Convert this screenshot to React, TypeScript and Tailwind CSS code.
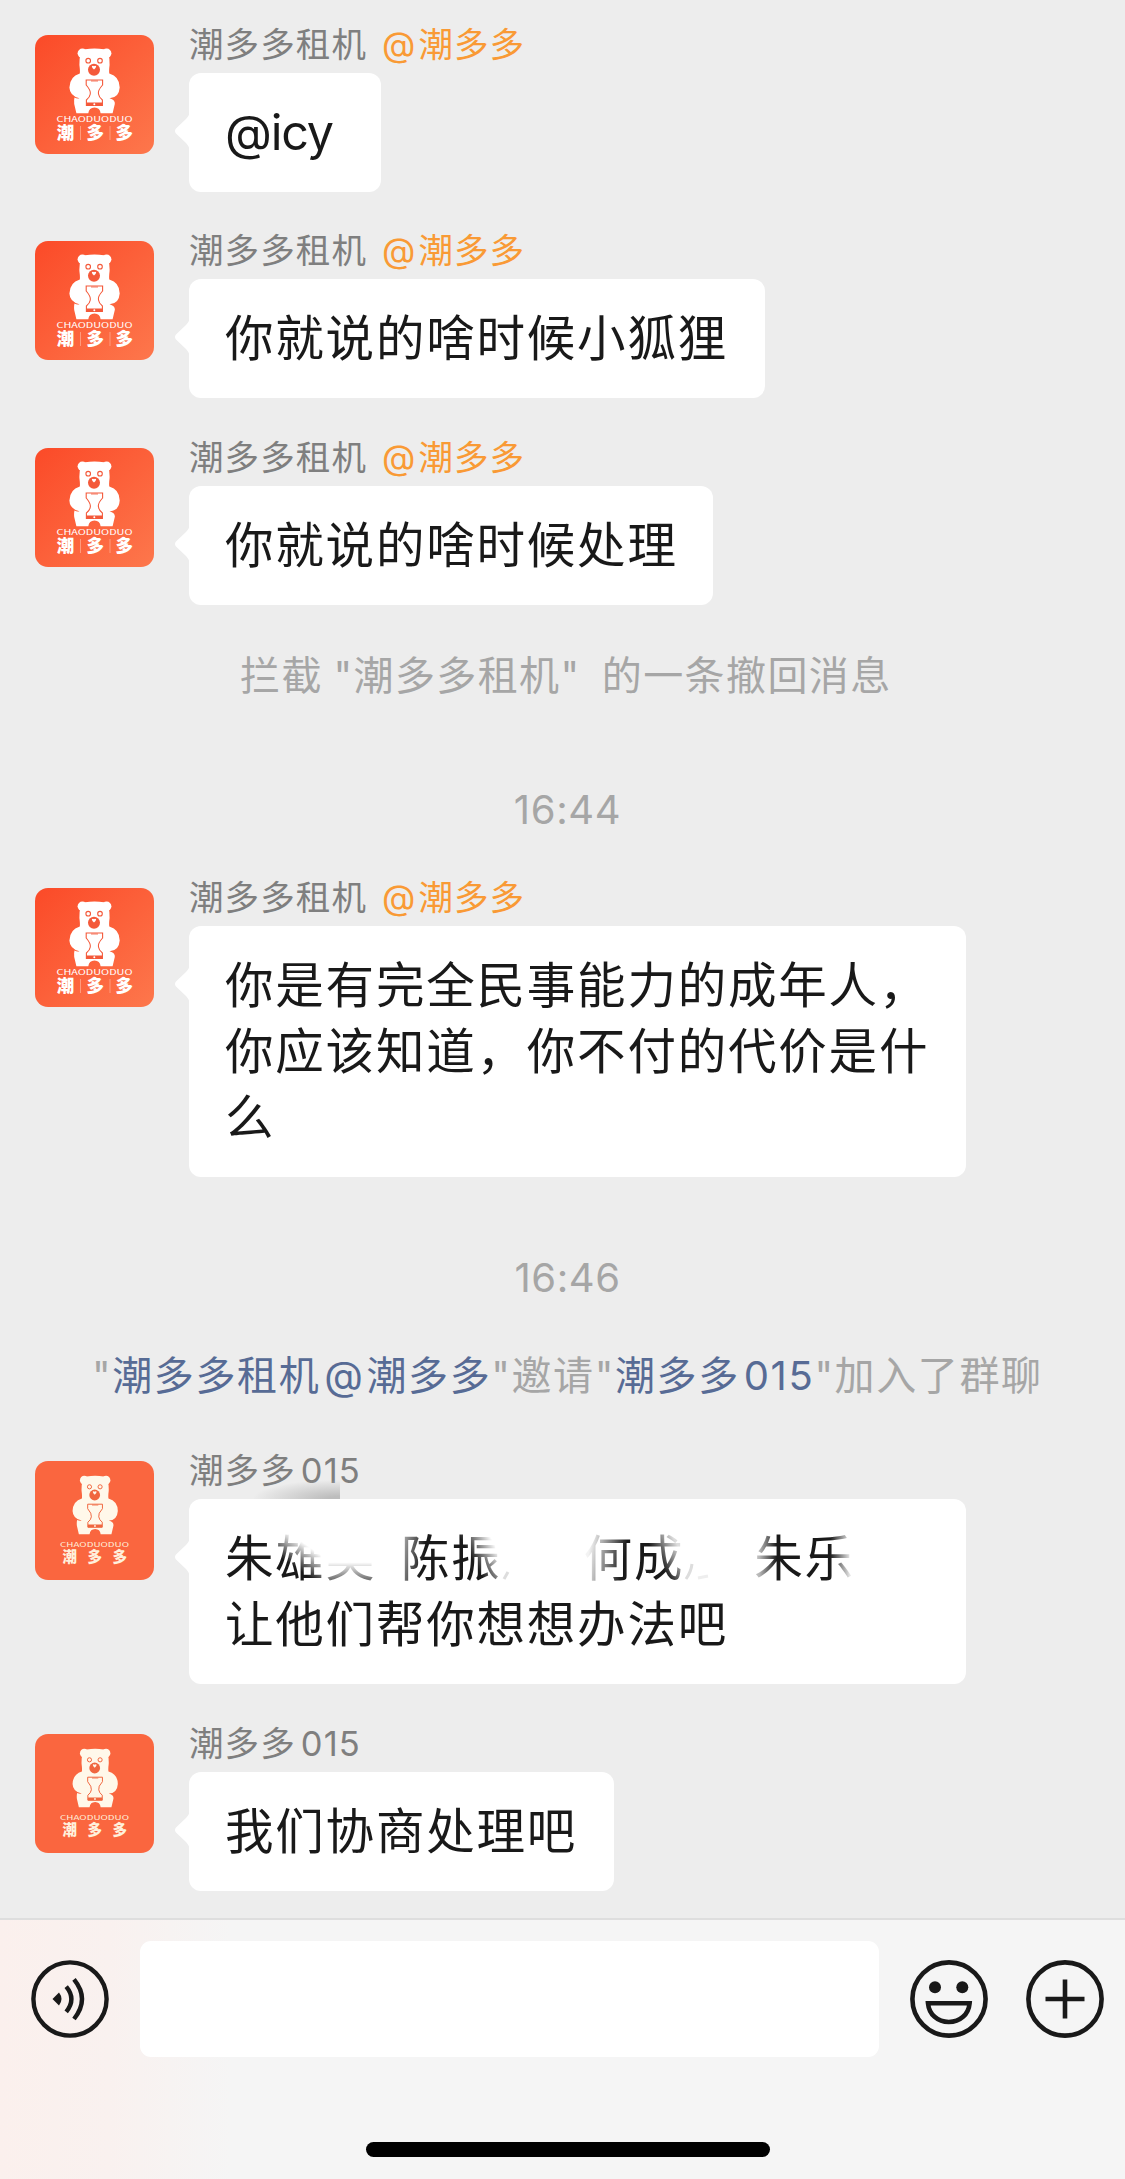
import React from 'react';
import clsx from 'clsx';

const cjk = "font-['Inter','Noto_Sans_CJK_SC',sans-serif]";

const Bear = ({ fill, ground }: { fill: string; ground: string }) => (
  <g>
    <g fill={fill}>
      <circle cx="47.4" cy="18.3" r="4.8" />
      <circle cx="71.6" cy="18.3" r="4.8" />
      <path d="M50 14.3 Q59.5 12.6 69 14.3 Q75 17 74.6 30 Q73.8 36 74.3 38.6 Q84.6 41.5 84.7 52.5 Q84 63 74.5 63.2 Q80.5 65 79.8 69 L77.6 78.3 H65.6 Q65 72.8 59.5 72.6 Q54 72.8 53.3 78.3 H41.4 L39.2 69 Q38.8 65 39.5 62.6 Q42 64 44.5 63.2 Q34.7 61 34.4 52.5 Q34.8 41.5 44.8 38.6 Q45.2 36 44.4 30 Q44 17 50 14.3 Z" />
    </g>
    <g fill="none" stroke={ground}>
      <circle cx="53.2" cy="25.7" r="2.3" strokeWidth="1.1" />
      <circle cx="65" cy="25.7" r="2.3" strokeWidth="1.1" />
      <path
        d="M51.2 45 H67.6 V50 Q62.5 55.5 63.5 59 Q64 62.5 67.4 65 V70.5 H51.4 V65 Q54.8 62.5 55.3 59 Q56 55.5 51.2 50 Z"
        strokeWidth="1.1"
      />
      <path d="M56 46 H63" strokeWidth=".8" />
    </g>
    <path d="M51.4 67.6 H67.4 V70.8 H51.4 Z" fill={ground} />
    <circle cx="59.3" cy="69.2" r="1" fill={fill} />
    <circle cx="59" cy="34.8" r="6" fill={ground} />
    <path d="M56.8 31.2 Q58 30.2 59 31.2 Q60 30.2 61.2 31.2 Q61 33 59 34.5 Q57 33 56.8 31.2 Z" fill={fill} />
  </g>
);

const Avatar = ({ flat }: { flat?: boolean }) => (
  <svg
    viewBox="0 0 119 119"
    className="w-[119px] h-[119px] shrink-0 rounded-[13px] font-['Noto_Sans_CJK_SC',sans-serif]"
  >
    <defs>
      <linearGradient id="brand" x1="0" y1="0" x2="1" y2="1">
        <stop offset="0" stopColor="#fb4a28" />
        <stop offset="1" stopColor="#fd774c" />
      </linearGradient>
    </defs>
    {flat ? (
      <>
        <rect width="119" height="119" fill="#fa663f" />
        <g transform="translate(6.6 2.7) scale(.9)">
          <Bear fill="#fff8ea" ground="#f0663f" />
        </g>
        <g fill="#fff0dc">
          <text x="25" y="86" fontSize="6.6" textLength="69" lengthAdjust="spacingAndGlyphs">
            CHAODUODUO
          </text>
          <g fontSize="14.5" fontWeight="900">
            <text x="27.5" y="101">潮</text>
            <text x="52.5" y="101">多</text>
            <text x="77.5" y="101">多</text>
          </g>
        </g>
      </>
    ) : (
      <>
        <rect width="119" height="119" fill="url(#brand)" />
        <Bear fill="#fff" ground="#f4593a" />
        <g fill="#fff">
          <text x="21.5" y="87.3" fontSize="7" textLength="76" lengthAdjust="spacingAndGlyphs">
            CHAODUODUO
          </text>
          <g fontSize="17.5" fontWeight="900">
            <text x="21.8" y="104">潮</text>
            <text x="51.6" y="104">多</text>
            <text x="80.6" y="104">多</text>
          </g>
          <path d="M45.5 91 V105 M75 91 V105" stroke="#ff9a7c" strokeWidth="1" />
        </g>
      </>
    )}
  </svg>
);

type MessageProps = {
  name: string;
  suffix?: string;
  tag?: string;
  width: string;
  className?: string;
  children: React.ReactNode;
};

const Message = ({ name, suffix, tag, width, className, children }: MessageProps) => (
  <div className={clsx('flex gap-[35px] pl-[35px]', className)}>
    <Avatar flat={!tag} />
    <div className="-mt-[15px]">
      <div className="h-[53px] text-[34.5px] leading-[50px] tracking-[1.1px] text-[#7f7f7f] whitespace-pre">
        {name}
        {suffix && <span className="ml-[5px]">{suffix}</span>}
        {tag && (
          <span className="ml-[15px] text-[#f99a35]">
            <span className="mr-[2px]">@</span>
            {tag}
          </span>
        )}
      </div>
      <div
        className={clsx(
          'relative rounded-[12px] bg-white px-[36px] pt-[27px] pb-[26px] text-[48.5px] leading-[66px] tracking-[1.8px] text-[#191919] whitespace-pre',
          width
        )}
      >
        <svg viewBox="0 0 16 38" className="absolute -left-[15px] top-[39px] w-[16px] h-[38px]" fill="#fff">
          <path d="M16 0 Q15 4 12 7 L2 16.5 Q0 19 2 21.5 L12 31 Q15 34 16 38 Z" />
        </svg>
        {children}
      </div>
    </div>
  </div>
);

const MaskedNames = () => (
  <div className="flex h-[66px]">
    <span>朱</span>
    <span className="[mask-image:linear-gradient(35deg,#000_38%,transparent_68%)]">雄</span>
    <span className="[mask-image:linear-gradient(180deg,transparent_55%,rgba(0,0,0,.6)_80%)]">英</span>
    <span className="ml-[25px] [mask-image:linear-gradient(100deg,rgba(0,0,0,.35)_5%,#000_45%)]">陈</span>
    <span className="[mask-image:linear-gradient(60deg,#000_45%,transparent_80%)]">振</span>
    <svg viewBox="0 0 50 66" className="w-[50px] h-[66px]" fill="none" stroke="#ddd" strokeWidth="3">
      <path d="M2 53 L6 46" />
    </svg>
    <span className="ml-[32px] [mask-image:linear-gradient(100deg,rgba(0,0,0,.05)_15%,#000_75%)]">何</span>
    <span className="[mask-image:linear-gradient(60deg,#000_48%,rgba(0,0,0,.15)_80%)]">成</span>
    <svg viewBox="0 0 50 66" className="w-[50px] h-[66px]" fill="none" stroke="#ddd" strokeWidth="3">
      <path d="M2 53 Q7 46 8 38" />
      <path d="M14 52 L24 50" stroke="#eee" />
    </svg>
    <span className="ml-[20px] [mask-image:linear-gradient(90deg,rgba(0,0,0,.3)_10%,#000_45%)]">朱</span>
    <span className="[mask-image:linear-gradient(90deg,#000_50%,rgba(0,0,0,.1)_90%)]">乐</span>
  </div>
);

const InputBar = () => (
  <div className="h-[261px] border-t-2 border-[#dedede] bg-[#f5f5f5] bg-[linear-gradient(90deg,#fbf0ed_0,#f9f1ef_110px,#f5f5f5_230px)]">
    <div className="flex items-center h-[116px] mt-[21px] pl-[31px] pr-[21px] text-[#191919]">
      <svg viewBox="0 0 78 78" className="w-[78px] h-[78px]" fill="none" stroke="currentColor" strokeWidth="4.4">
        <circle cx="39" cy="39" r="36.6" />
        <path d="M35.2 26.6 Q45.6 39 35.2 51.8" />
        <path d="M43 19.4 Q59 39 43 59" />
        <path d="M21.5 39 L28 32.6 Q33 39 28 45.4 Z" fill="currentColor" stroke="none" />
      </svg>
      <div className="ml-[31px] w-[739px] h-[116px] rounded-[11px] bg-white" />
      <svg
        viewBox="0 0 78 78"
        className="ml-[31px] w-[78px] h-[78px]"
        fill="none"
        stroke="currentColor"
        strokeWidth="4.6"
      >
        <circle cx="39" cy="39" r="36.6" />
        <circle cx="25" cy="27.3" r="6" fill="currentColor" stroke="none" />
        <circle cx="52.3" cy="27.3" r="6" fill="currentColor" stroke="none" />
        <path d="M18 43.2 H59.6 C58.6 54.5 50 62 38.8 62 C27.6 62 19 54.5 18 43.2 Z" />
      </svg>
      <svg
        viewBox="0 0 78 78"
        className="ml-auto w-[78px] h-[78px]"
        fill="none"
        stroke="currentColor"
        strokeWidth="4.6"
      >
        <circle cx="39" cy="39" r="36.6" />
        <path d="M39 19.5 V58.5 M19.5 39 H58.5" />
      </svg>
    </div>
    <div className="mx-auto mt-[85px] w-[404px] h-[15px] translate-x-[5px] rounded-full bg-black" />
  </div>
);

const App = () => {
  return (
    <div className={clsx('w-[1125px] h-[2179px] flex flex-col overflow-hidden bg-[#ededed]', cjk)}>
      <div className="h-[1918px] shrink-0 pt-[35px]">
        <Message name="潮多多租机" tag="潮多多" width="w-[192px]">
          <span className="tracking-[-1.2px]">@icy</span>
        </Message>
        <Message name="潮多多租机" tag="潮多多" width="w-[576px]" className="mt-[49px]">
          你就说的啥时候小狐狸
        </Message>
        <Message name="潮多多租机" tag="潮多多" width="w-[524px]" className="mt-[50px]">
          你就说的啥时候处理
        </Message>

        <div className="mt-[45px] h-[52px] pl-[240px] text-[40px] leading-[52px] tracking-[1.4px] [word-spacing:-2px] text-[#a6a6a6] whitespace-pre">
          拦截 "潮多多租机"  的一条撤回消息
        </div>
        <div className="mt-[83px] h-[50px] text-center text-[40px] leading-[50px] tracking-[.6px] text-[#a6a6a6] translate-x-[5px]">
          16:44
        </div>

        <Message name="潮多多租机" tag="潮多多" width="w-[777px]" className="mt-[53px]">
          <div>你是有完全民事能力的成年人，</div>
          <div>你应该知道，你不付的代价是什</div>
          <div>么</div>
        </Message>

        <div className="mt-[76px] h-[50px] text-center text-[40px] leading-[50px] tracking-[.6px] text-[#a6a6a6] translate-x-[5px]">
          16:46
        </div>
        <div className="mt-[47px] h-[52px] pl-[92px] text-[40px] leading-[52px] tracking-[1.6px] text-[#a6a6a6] whitespace-pre">
          "
          <span className="text-[#576b95]">
            潮多多租机<span className="ml-[4px] mr-[2px]">@</span>潮多多
          </span>
          "邀请"
          <span className="text-[#576b95]">
            潮多多<span className="ml-[4px]">015</span>
          </span>
          "加入了群聊
        </div>

        <Message name="潮多多" suffix="015" width="w-[777px]" className="mt-[59px]">
          <div className="absolute left-[65px] -top-[19px] w-[86px] h-[19px] bg-[radial-gradient(ellipse_at_bottom_right,#bdbdbd_10%,transparent_72%)]" />
          <MaskedNames />
          <div>让他们帮你想想办法吧</div>
        </Message>
        <Message name="潮多多" suffix="015" width="w-[425px]" className="mt-[50px]">
          我们协商处理吧
        </Message>
      </div>
      <InputBar />
    </div>
  );
};

export default App;
